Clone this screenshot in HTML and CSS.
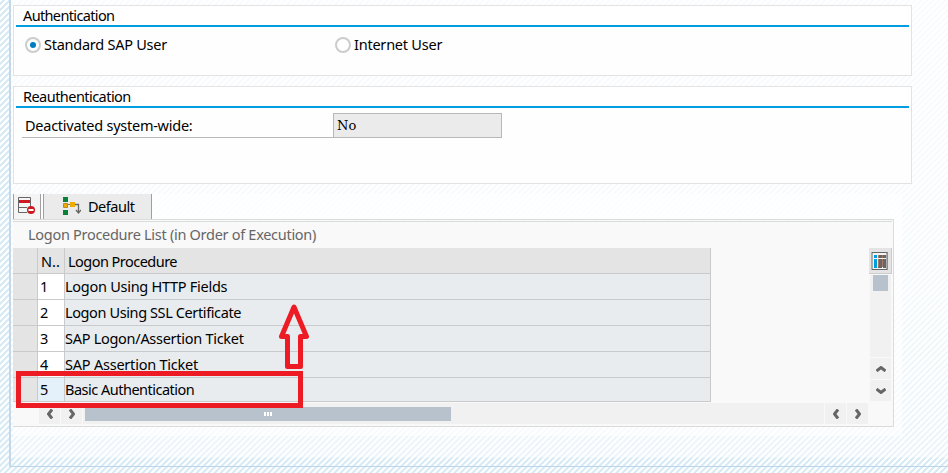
FILE: index.html
```html
<!DOCTYPE html>
<html lang="en">
<head>
<meta charset="utf-8">
<title>Logon Data</title>
<link rel="stylesheet" href="styles.css">
</head>
<body>
<main class="page">
  <section class="panel auth">
    <h2 class="panel-title"><span class="t-auth">Authentication</span></h2>
    <div class="radios">
      <label class="radio"><i class="dial on"></i><span class="t-std">Standard SAP User</span></label>
      <label class="radio"><i class="dial"></i><span class="t-int">Internet User</span></label>
    </div>
  </section>
  <section class="panel reauth">
    <h2 class="panel-title"><span class="t-reauth">Reauthentication</span></h2>
    <div class="field"><span class="field-label"><span class="t-deact">Deactivated system-wide:</span></span><span class="field-value">No</span></div>
  </section>
  <section class="list-area">
    <div class="toolbar">
      <button class="tool tool-delete" aria-label="Delete row">
        <svg width="18" height="18" viewBox="0 0 18 18"><path d="M12.500 10V.5H.5v15H9M.5 10.500H9" fill="none" stroke="#666"/><path d="M1 3h11v3H1z" fill="#cc1a20"/><circle cx="13" cy="13" r="4" fill="#cc1a20"/><path d="M10.500 12h5v2h-5z" fill="#fff"/></svg>
      </button>
      <button class="tool tool-default">
        <svg width="18" height="18" viewBox="0 0 18 18"><path d="M0 0h5v5H0zM0 13h5v5H0z" fill="#078238"/><path d="M.5 6.500h4v4h-4z" fill="#f0ab00" stroke="#b98a20"/><path d="M7 5h5v5H7z" fill="#f0ab00"/><path d="M5 7h2v1H5z" fill="#777"/><path d="M12 7.500h3.500V15M13 13l2.500 3 2.500-3" fill="none" stroke="#666" stroke-width="1.300"/></svg>
        <span class="t-default">Default</span>
      </button>
    </div>
    <div class="grid-box">
      <div class="caption"><span class="t-caption">Logon Procedure List (in Order of Execution)</span></div>
      <div class="grid-main">
        <div class="rows">
          <div class="row head"><span></span><span>N..</span><span><span class="t-proc">Logon Procedure</span></span></div>
          <div class="row"><span></span><span>1</span><span><span class="t-http">Logon Using HTTP Fields</span></span></div>
          <div class="row"><span></span><span>2</span><span><span class="t-ssl">Logon Using SSL Certificate</span></span></div>
          <div class="row"><span></span><span>3</span><span><span class="t-la">SAP Logon/Assertion Ticket</span></span></div>
          <div class="row"><span></span><span>4</span><span><span class="t-at">SAP Assertion Ticket</span></span></div>
          <div class="row last"><span></span><span>5</span><span><span class="t-basic">Basic Authentication</span></span></div>
        </div>
        <div class="side">
          <div class="config"><svg width="17" height="18" viewBox="0 0 17 18"><path d="M1 .5h15v17H1z" fill="#f4f4f4" stroke="#666"/><path d="M.5 0v18" stroke="#c9a27a"/><path d="M16.500 0v18" stroke="#6a96b8"/><path d="M3 3h3v3H3zM3 7h3v9H3z" fill="#009de0"/><path d="M7 3h4v3H7zM7 7h4v9H7zM12 3h3v3h-3zM12 7h3v9h-3z" fill="#666"/><path d="M7.500 3v3m0 1v8M11.500 3v3m0 1v8" stroke="#a87860"/></svg></div>
          <div class="vtrack"><i></i></div>
          <div class="sbtn"><svg width="10" height="6" viewBox="0 0 10 6"><path d="M.5 5L5 1.500 9.500 5"/></svg></div>
          <div class="sbtn"><svg width="10" height="6" viewBox="0 0 10 6"><path d="M.5 1L5 4.500 9.500 1"/></svg></div>
        </div>
      </div>
      <div class="hscroll">
        <div class="sbtn"><svg width="6" height="10" viewBox="0 0 6 10"><path d="M5 .5L1.500 5 5 9.500"/></svg></div>
        <div class="sbtn"><svg width="6" height="10" viewBox="0 0 6 10"><path d="M1 .5L4.500 5 1 9.500"/></svg></div>
        <div class="htrack"><div class="hthumb"><i></i><i></i><i></i></div></div>
        <div class="sbtn"><svg width="6" height="10" viewBox="0 0 6 10"><path d="M5 .5L1.500 5 5 9.500"/></svg></div>
        <div class="sbtn"><svg width="6" height="10" viewBox="0 0 6 10"><path d="M1 .5L4.500 5 1 9.500"/></svg></div>
      </div>
    </div>
    <div class="mark"></div>
    <svg class="arrow" width="32" height="68" viewBox="0 0 32 68"><path d="M16 5L28.500 34.500H22.500V64.500H9.500V34.500H3.500Z" fill="none" stroke="#ed1c24" stroke-width="5" stroke-linejoin="round"/></svg>
  </section>
</main>
</body>
</html>
```
FILE: styles.css
```css
* { box-sizing: border-box; }
body {
  margin: 0;
  height: 473px;
  overflow: hidden;
  padding-left: 9px;
  font: 14.5px/20px "Noto Sans", sans-serif;
  color: #000;
  background: repeating-linear-gradient(135deg, #fff 0 1.4px, #d6eaf5 2.200px 3.500px, #fff 4.240px);
}
.page {
  height: 467px;
  padding: 5px 0 0 2px;
  border-left: 2px solid #c5d7e8;
  border-bottom: 1px solid #bcd5ea;
  background: linear-gradient(rgba(255,255,255,.85), rgba(255,255,255,.78) 50%, rgba(255,255,255,.5) 457px, transparent 458px);
}
.panel {
  width: 899px;
  border: 1px solid #e3e3e3;
  background: #fefefe;
}
.auth { height: 71px; margin-bottom: 10px; }
.reauth { height: 98px; margin-bottom: 10px; }
.panel-title {
  margin: 0 2px;
  height: 21px;
  padding-left: 7px;
  border-bottom: 2px solid #009de0;
  font: inherit;
  line-height: 19px;
  background: #fff;
}
.radios { display: flex; padding: 9px 0 0 11px; line-height: 16px; }
.radio { width: 310px; height: 20px; display: flex; gap: 3px; }
.dial { width: 16px; height: 16px; margin-top: 1px; padding: 3px; border: 2px solid #ccc; border-radius: 50%; background: #fff; }
.dial.on::after { content: ""; display: block; width: 6px; height: 6px; border-radius: 50%; background: #007cc0; }
.field { display: flex; margin: 5px 0 0 8px; height: 25px; }
.field-label { width: 311px; padding: 2px 0 0 3px; border-bottom: 1px solid #b8b8b8; }
.field-value {
  width: 169px;
  padding: 2px 0 0 3px;
  border: 1px solid #b8b8b8;
  background: #ebebeb;
  font: 13px/20px "DejaVu Serif", serif;
}
.list-area { position: relative; width: 889px; height: 242px; background: rgba(255,255,255,.6); }
.toolbar { display: flex; gap: 2px; height: 25px; }
.tool {
  height: 25px;
  padding: 0;
  border: 0 solid #a0a0a0;
  border-width: 0 1px;
  background: #ebebeb;
  color: inherit;
  font: inherit;
  display: flex;
  align-items: center;
}
.tool-delete { width: 28px; padding-left: 4px; background: #f4f4f4; }
.tool-delete svg { margin-top: -1px; }
.tool-default { width: 109px; padding: 0 0 1px 19px; gap: 7px; }
.grid-box {
  width: 881px;
  height: 208px;
  border: 1px solid #dadcdc;
  border-left: 0;
  background: #f9f9f9;
}
.caption { height: 27px; width: 879px; margin-top: 1px; padding: 2px 0 0 15px; border-top: 1px solid #dadcdc; color: #666; }
.grid-main { display: flex; justify-content: space-between; width: 879px; height: 153px; }
.rows { width: 698px; }
.row { display: grid; grid-template-columns: 25px 27px 646px; height: 26px; line-height: 25px; }
.row > span { height: 26px; border: 0 solid #c8cacb; border-width: 0 1px 1px 0; background: #e8ecef; white-space: nowrap; }
.row > span:first-child { background: #e4e4e4; }
.row > span:nth-child(2) { padding-left: 2px; background: #fff; }
.row.head > span { background: #e4e4e4; line-height: 26px; }
.row.head > span:nth-child(n+2) { padding-left: 3px; }
.row.last { height: 24px; line-height: 23px; }
.row.last > span { height: 24px; }
.row.last > span:nth-child(2) { background: #e4f1fa; }
.side { width: 23px; display: flex; flex-direction: column; align-items: flex-start; gap: 1px; }
.config { width: 23px; height: 26px; padding: 4px 0 0 2px; border: solid #ccc; border-width: 0 1px 1px 0; background: #e4e4e4; }
.config svg { display: block; }
.vtrack { width: 21px; height: 82px; margin-left: 1px; background: #f1f1f1; }
.vtrack i { display: block; width: 15px; height: 16px; margin-left: 3px; background: #b8c2cc; }
.sbtn { flex: none; width: 21px; height: 21px; display: flex; align-items: center; justify-content: center; background: #f1f1f1; }
.side .sbtn { margin-left: 1px; }
.sbtn path { fill: none; stroke: #666; stroke-width: 3; }
.hscroll { display: flex; gap: 1px; margin: 2px 0 0 26px; }
.htrack { width: 741px; height: 21px; padding: 4px 0 0 2px; background: #f1f1f1; }
.hthumb { width: 366px; height: 14px; display: flex; align-items: center; justify-content: center; gap: 1px; background: #b8c2cc; }
.hthumb i { width: 2px; height: 4px; background: #fff; }
.mark { position: absolute; left: 3px; top: 177px; width: 287px; height: 37px; border: 5px solid #ed1c24; }
.arrow { position: absolute; left: 265px; top: 108px; }

.t-auth { letter-spacing: -.64px; }
.t-reauth { letter-spacing: -.54px; }
.t-std { letter-spacing: -.25px; }
.t-int { letter-spacing: -.23px; }
.t-deact { letter-spacing: -.25px; }
.t-default { letter-spacing: -.47px; }
.t-caption { letter-spacing: -.29px; }
.t-proc { letter-spacing: -.53px; }
.t-http { letter-spacing: -.27px; }
.t-ssl { letter-spacing: -.39px; }
.t-la { letter-spacing: -.28px; }
.t-at { letter-spacing: -.22px; }
.t-basic { letter-spacing: -.5px; }
```
